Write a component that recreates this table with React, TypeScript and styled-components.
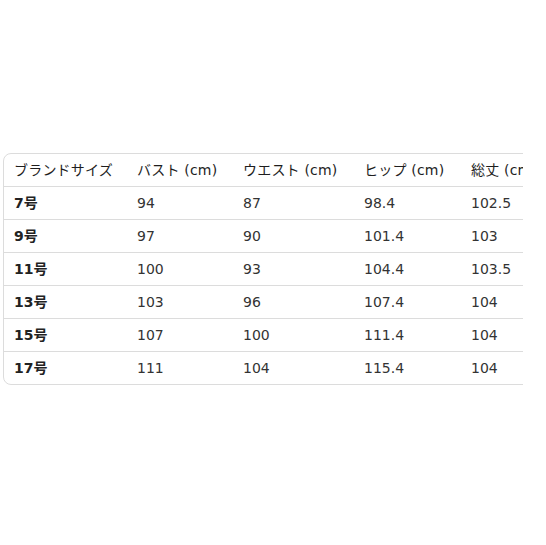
import React from "react";
import styled, { createGlobalStyle } from "styled-components";

const Global = createGlobalStyle`
  html, body { margin: 0; padding: 0; background: #fff; }
  body { font-family: "DejaVu Sans", "Noto Sans CJK JP", sans-serif; color: #333; }
`;

const Page = styled.div`
  padding: 153px 0 0 3px;
`;

const Clip = styled.div`
  width: 520px;
  overflow: hidden;
`;

const Frame = styled.div`
  width: max-content;
  border: 1px solid #dcdcdc;
  border-radius: 8px;
  overflow: hidden;
`;

const Table = styled.table`
  border-collapse: collapse;
  font-size: 14px;
  line-height: 16px;
  white-space: nowrap;
`;

const Row = styled.tr<{ $last?: boolean }>`
  border-bottom: ${(p) => (p.$last ? "none" : "1px solid #dcdcdc")};
`;

const HeadCell = styled.th<{ $w?: number }>`
  box-sizing: border-box;
  width: ${(p) => (p.$w ? `${p.$w}px` : "auto")};
  padding: 8px 12px 8px 10px;
  text-align: left;
  font-weight: normal;
  letter-spacing: 0.2px;
  color: #1e1e1e;
`;

const Cell = styled.td<{ $bold?: boolean }>`
  padding: 8px 12px 8px 10px;
  text-align: left;
  font-weight: ${(p) => (p.$bold ? 700 : 400)};
  color: ${(p) => (p.$bold ? "#222" : "#333")};
`;

const headers: { label: string; w?: number }[] = [
  { label: "ブランドサイズ", w: 123 },
  { label: "バスト (cm)", w: 106 },
  { label: "ウエスト (cm)", w: 121 },
  { label: "ヒップ (cm)", w: 107 },
  { label: "総丈 (cm)" },
];
const rows = [
  ["7号", "94", "87", "98.4", "102.5"],
  ["9号", "97", "90", "101.4", "103"],
  ["11号", "100", "93", "104.4", "103.5"],
  ["13号", "103", "96", "107.4", "104"],
  ["15号", "107", "100", "111.4", "104"],
  ["17号", "111", "104", "115.4", "104"],
];

export default function App() {
  return (
    <>
      <Global />
      <Page>
        <Clip>
          <Frame>
            <Table>
              <thead>
                <Row>
                  {headers.map((h) => (
                    <HeadCell key={h.label} $w={h.w}>
                      {h.label}
                    </HeadCell>
                  ))}
                </Row>
              </thead>
              <tbody>
                {rows.map((r, i) => (
                  <Row key={r[0]} $last={i === rows.length - 1}>
                    {r.map((c, j) => (
                      <Cell key={j} $bold={j === 0}>
                        {c}
                      </Cell>
                    ))}
                  </Row>
                ))}
              </tbody>
            </Table>
          </Frame>
        </Clip>
      </Page>
    </>
  );
}
